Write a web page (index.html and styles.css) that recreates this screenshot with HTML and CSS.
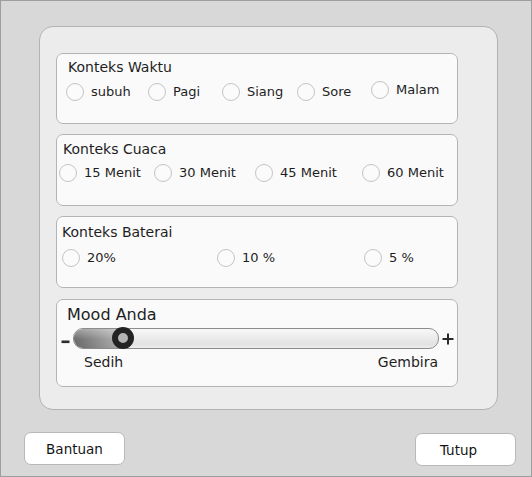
FILE: index.html
```html
<!DOCTYPE html>
<html lang="id">
<head>
<meta charset="utf-8">
<title>Pengaturan Konteks</title>
<link rel="stylesheet" href="styles.css">
</head>
<body>
<div class="window">
  <div class="panel">
    <fieldset class="group g-waktu">
      <div class="title t-waktu">Konteks Waktu</div>
      <div class="row row-waktu">
        <label class="opt"><input type="radio" name="waktu"><span>subuh</span></label>
        <label class="opt"><input type="radio" name="waktu"><span>Pagi</span></label>
        <label class="opt"><input type="radio" name="waktu"><span>Siang</span></label>
        <label class="opt"><input type="radio" name="waktu"><span>Sore</span></label>
        <label class="opt opt-up"><input type="radio" name="waktu"><span>Malam</span></label>
      </div>
    </fieldset>
    <fieldset class="group g-cuaca">
      <div class="title t-cuaca">Konteks Cuaca</div>
      <div class="row row-cuaca">
        <label class="opt"><input type="radio" name="cuaca"><span>15 Menit</span></label>
        <label class="opt"><input type="radio" name="cuaca"><span>30 Menit</span></label>
        <label class="opt"><input type="radio" name="cuaca"><span>45 Menit</span></label>
        <label class="opt"><input type="radio" name="cuaca"><span>60 Menit</span></label>
      </div>
    </fieldset>
    <fieldset class="group g-baterai">
      <div class="title">Konteks Baterai</div>
      <div class="row row-baterai">
        <label class="opt"><input type="radio" name="baterai"><span>20%</span></label>
        <label class="opt"><input type="radio" name="baterai"><span>10 %</span></label>
        <label class="opt"><input type="radio" name="baterai"><span>5 %</span></label>
      </div>
    </fieldset>
    <fieldset class="group g-mood">
      <div class="mood-title">Mood Anda</div>
      <div class="slider-row">
        <svg class="minus" width="9" height="4" viewBox="0 0 9 4"><rect x="0.5" y="0.5" width="8" height="2.6" fill="#2a2a2a"/></svg>
        <div class="track">
          <div class="fill" style="width:50px"></div>
          <div class="thumb"></div>
        </div>
        <svg class="plus" width="12" height="12" viewBox="0 0 12 12"><rect x="0.5" y="5" width="11" height="2" fill="#2a2a2a"/><rect x="5" y="0.5" width="2" height="11" fill="#2a2a2a"/></svg>
      </div>
      <div class="scale">
        <span>Sedih</span>
        <span>Gembira</span>
      </div>
    </fieldset>
  </div>
  <div class="footer">
    <button class="btn" type="button">Bantuan</button>
    <button class="btn btn-close" type="button">Tutup</button>
  </div>
</div>
</body>
</html>
```

FILE: styles.css
```css
html, body {
  margin: 0;
  padding: 0;
}

body {
  width: 532px;
  height: 477px;
  font-family: "DejaVu Sans", "Liberation Sans", sans-serif;
  color: #1e1e1e;
}

.window {
  box-sizing: border-box;
  width: 532px;
  height: 477px;
  border: 1px solid #9e9e9e;
  background: #d8d8d8;
}

.panel {
  box-sizing: border-box;
  width: 459px;
  height: 384px;
  margin: 25px 0 0 38px;
  padding: 26px 0 0 16px;
  background: #ececec;
  border: 1px solid #b2b2b2;
  border-radius: 14px;
  display: flex;
  flex-direction: column;
  gap: 10px;
}

.group {
  box-sizing: border-box;
  width: 402px;
  margin: 0;
  min-width: 0;
  background: #fafafa;
  border: 1px solid #b4b4b4;
  border-radius: 7px;
}

.g-waktu {
  height: 71px;
  padding: 5px 0 0 9px;
}

.g-cuaca {
  height: 72px;
  padding: 6px 0 0 2px;
}

.g-baterai {
  height: 72px;
  padding: 7px 0 0 5px;
}

.g-mood {
  height: 88px;
  margin-top: 1px;
  padding: 5px 0 0 0;
}

.title {
  font-size: 14px;
  line-height: 17px;
}

.t-waktu {
  margin-left: 2px;
}

.t-cuaca {
  margin-left: 4px;
}

.row {
  display: grid;
  align-items: center;
}

.row-waktu {
  margin-top: 7px;
  grid-template-columns: 82px 74px 75px 74px auto;
}

.row-cuaca {
  margin-top: 6px;
  grid-template-columns: 95px 101px 107px auto;
}

.row-baterai {
  margin-top: 8px;
  grid-template-columns: 155px 147px auto;
}

.opt {
  display: flex;
  align-items: center;
  gap: 7px;
  font-size: 13px;
  line-height: 18px;
  height: 18px;
}

.opt-up {
  align-self: start;
  margin-top: -2px;
}

.opt input {
  appearance: none;
  -webkit-appearance: none;
  box-sizing: border-box;
  width: 18px;
  height: 18px;
  margin: 0;
  flex: none;
  border: 1px solid #c4c4c4;
  border-radius: 50%;
  background: #fbfbfb;
}

.mood-title {
  margin-left: 10px;
  font-size: 16px;
  line-height: 19px;
}

.slider-row {
  display: flex;
  align-items: center;
  height: 23px;
  margin-top: 3px;
  padding-left: 4px;
}

.minus {
  display: block;
  flex: none;
  margin-top: 7px;
}

.track {
  position: relative;
  box-sizing: border-box;
  flex: none;
  width: 366px;
  height: 21px;
  margin-left: 3px;
  border: 1px solid #8c8c8c;
  border-radius: 10px;
  background: linear-gradient(to bottom, #f7f7f7 0%, #ececec 45%, #e2e2e2 80%, #eeeeee 100%);
}

.fill {
  position: absolute;
  left: 0;
  top: 0;
  bottom: 0;
  border-radius: 9px 0 0 9px;
  background:
    linear-gradient(to bottom, rgba(255, 255, 255, 0.35), rgba(255, 255, 255, 0) 55%, rgba(0, 0, 0, 0.05)),
    linear-gradient(to right, #6c6c6c, #b8b8b8);
}

.thumb {
  position: absolute;
  box-sizing: border-box;
  left: 38px;
  top: -2px;
  width: 22px;
  height: 22px;
  border: 6px solid #232323;
  border-radius: 50%;
  background: #b4b4b4;
}

.plus {
  display: block;
  flex: none;
  margin-left: 3px;
}

.scale {
  display: flex;
  justify-content: space-between;
  margin: 4px 19px 0 27px;
  font-size: 14px;
  line-height: 17px;
}

.footer {
  display: flex;
  justify-content: space-between;
  align-items: flex-start;
  margin-top: 22px;
  padding: 0 15px 0 23px;
}

.btn {
  box-sizing: border-box;
  width: 101px;
  height: 33px;
  padding: 0;
  background: #ffffff;
  border: 1px solid #b8b8b8;
  border-radius: 7px;
  font-family: "DejaVu Sans", "Liberation Sans", sans-serif;
  font-size: 13.5px;
  color: #141414;
}

.btn-close {
  margin-top: 1px;
  padding-right: 14px;
}
```
